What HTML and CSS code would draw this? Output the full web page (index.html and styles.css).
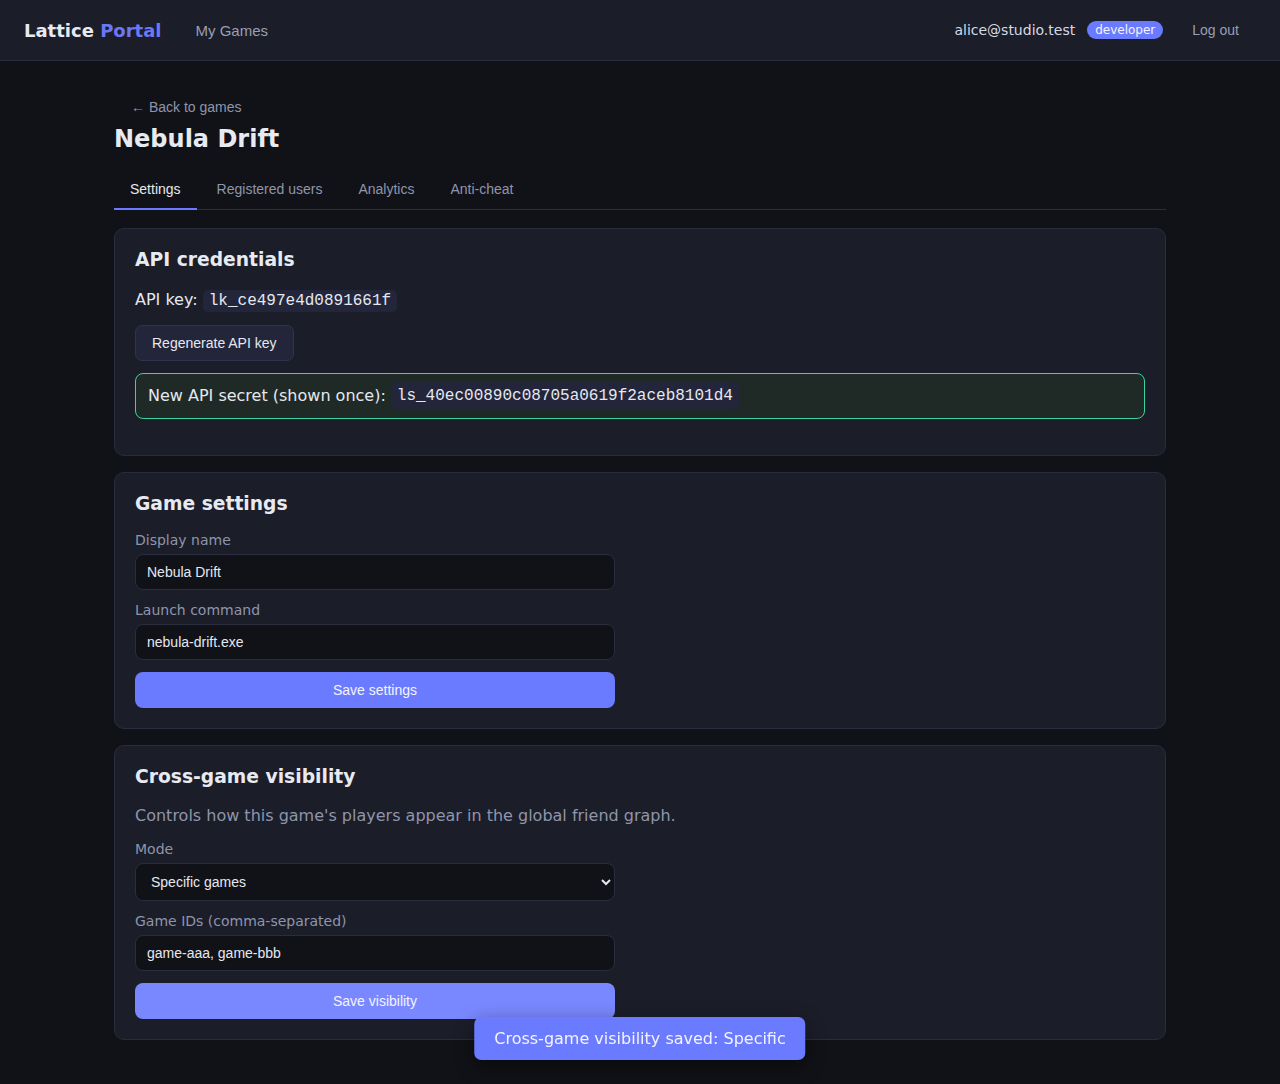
FILE: index.html
```html
<!DOCTYPE html>
<html lang="en">
<head>
<meta charset="utf-8">
<title>Lattice Portal</title>
<link rel="stylesheet" href="styles.css">
</head>
<body>
<header class="topbar">
  <div class="brand">Lattice <span class="brand-accent">Portal</span></div>
  <nav class="mainnav"><a class="navlink" href="#">My Games</a></nav>
  <div class="user">
    <span class="email">alice@studio.test</span>
    <span class="badge">developer</span>
    <button class="linkbtn logout">Log out</button>
  </div>
</header>

<main class="page">
  <button class="linkbtn back">← Back to games</button>
  <h1 class="title">Nebula Drift</h1>

  <div class="tabs">
    <button class="tab active">Settings</button>
    <button class="tab">Registered users</button>
    <button class="tab">Analytics</button>
    <button class="tab">Anti-cheat</button>
  </div>

  <section class="card first">
    <h2>API credentials</h2>
    <p class="keyline">API key: <code>lk_ce497e4d0891661f</code></p>
    <button class="btn-secondary">Regenerate API key</button>
    <div class="secret">New API secret (shown once): <code>ls_40ec00890c08705a0619f2aceb8101d4</code></div>
  </section>

  <section class="card">
    <h2>Game settings</h2>
    <label class="field">
      <span class="label">Display name</span>
      <input class="input" type="text" value="Nebula Drift">
    </label>
    <label class="field">
      <span class="label">Launch command</span>
      <input class="input" type="text" value="nebula-drift.exe">
    </label>
    <button class="btn-primary">Save settings</button>
  </section>

  <section class="card">
    <h2>Cross-game visibility</h2>
    <p class="desc">Controls how this game's players appear in the global friend graph.</p>
    <label class="field">
      <span class="label">Mode</span>
      <select class="input select">
        <option>All games</option>
        <option selected>Specific games</option>
        <option>None</option>
      </select>
    </label>
    <label class="field">
      <span class="label">Game IDs (comma-separated)</span>
      <input class="input" type="text" value="game-aaa, game-bbb">
    </label>
    <button class="btn-primary hover">Save visibility</button>
  </section>
</main>

<div class="toast">Cross-game visibility saved: Specific</div>
</body>
</html>
```

FILE: styles.css
```css
* { box-sizing: border-box; }

html, body {
  margin: 0;
  padding: 0;
}

body {
  background: #111217;
  color: #e6e8f0;
  font-family: "DejaVu Sans", sans-serif;
  font-size: 16px;
  min-height: 1084px;
}

.topbar {
  height: 61px;
  display: flex;
  align-items: center;
  padding: 0 25px 0 24px;
  background: #1b1d29;
  border-bottom: 1px solid #2a2e45;
}

.brand {
  font-weight: bold;
  font-size: 18px;
  color: #e8eaf2;
}

.brand-accent { color: #6b78f5; }

.mainnav { margin-left: 34px; }

.navlink {
  font-family: "Liberation Sans", Arial, sans-serif;
  font-size: 15px;
  color: #9a9fb3;
  text-decoration: none;
}

.user {
  margin-left: auto;
  display: flex;
  align-items: center;
  gap: 12px;
}

.email {
  font-size: 14px;
  color: #d6d9e4;
}

.badge {
  background: #6b7bff;
  color: #f3f4ff;
  font-size: 12px;
  line-height: 18px;
  padding: 0 8px;
  border-radius: 9px;
}

.linkbtn {
  background: none;
  border: none;
  font-family: "Liberation Sans", Arial, sans-serif;
  font-size: 14px;
  color: #9a9fb3;
  padding: 6px 16px;
  cursor: pointer;
}

.logout { margin-left: 1px; }

.page {
  max-width: 1100px;
  margin: 0 auto;
  padding: 32px 24px 40px;
  display: flex;
  flex-direction: column;
  align-items: stretch;
}

.back {
  align-self: flex-start;
  height: 28px;
  padding: 0 16px;
  margin-left: 1px;
  color: #8f95ab;
}

.title {
  margin: 4px 0 0;
  font-size: 24px;
  line-height: 28px;
  font-weight: bold;
  color: #e8eaf2;
}

.tabs {
  margin-top: 21px;
  display: flex;
  gap: 4px;
  border-bottom: 1px solid #2c2f40;
}

.tab {
  height: 36px;
  padding: 0 16px 4px;
  background: none;
  border: none;
  border-bottom: 2px solid transparent;
  margin-bottom: -1px;
  font-family: "Liberation Sans", Arial, sans-serif;
  font-size: 14px;
  color: #8f95ab;
  cursor: pointer;
}

.tab.active {
  color: #e6e8f0;
  border-bottom-color: #6b7bff;
}

.card {
  margin-top: 16px;
  background: #1b1d29;
  border: 1px solid #2a2d3e;
  border-radius: 10px;
  padding: 19px 20px 20px;
}

.card.first { margin-top: 18px; }

.card h2 {
  margin: 0;
  font-size: 18.72px;
  line-height: 24px;
  font-weight: bold;
  color: #e8eaf2;
}

code {
  font-family: "Liberation Mono", "Courier New", monospace;
  font-size: 16px;
  background: #23263a;
  padding: 2px 6px;
  border-radius: 5px;
  color: #e6e8f0;
}

.keyline {
  margin: 16px 0 12px;
  line-height: 24px;
}

.btn-secondary {
  display: block;
  height: 36px;
  padding: 0 16px;
  background: #23263a;
  border: 1px solid #30344a;
  border-radius: 7px;
  color: #e6e8f0;
  font-family: "Liberation Sans", Arial, sans-serif;
  font-size: 14px;
  cursor: pointer;
}

.secret {
  height: 46px;
  margin: 12px 0 16px;
  padding: 0 12px;
  display: flex;
  align-items: center;
  gap: 5px;
  background: #1f2a26;
  border: 1px solid #3ad3a2;
  border-radius: 8px;
  line-height: 24px;
  color: #e6e8f0;
}

.field {
  display: flex;
  flex-direction: column;
  width: 480px;
  margin-bottom: 12px;
}

.card h2 + .field { margin-top: 16px; }

.label {
  font-size: 14px;
  line-height: 17px;
  color: #8f95ab;
  margin-bottom: 5px;
}

.input {
  height: 36px;
  padding: 0 11px;
  background: #111218;
  border: 1px solid #2a2d3e;
  border-radius: 8px;
  color: #e6e8f0;
  font-family: "Liberation Sans", Arial, sans-serif;
  font-size: 14px;
  outline: none;
}

.select {
  height: 38px;
  padding: 0 11px;
  color-scheme: dark;
}

.desc {
  margin: 15px 0 13px;
  line-height: 24px;
  color: #8f95ab;
}

.btn-primary {
  display: block;
  width: 480px;
  height: 36px;
  background: #6b7bff;
  border: none;
  border-radius: 8px;
  color: #f3f4ff;
  font-family: "Liberation Sans", Arial, sans-serif;
  font-size: 14px;
  cursor: pointer;
}

.btn-primary.hover {
  background: #7a88ff;
}

.toast {
  position: fixed;
  left: 50%;
  bottom: 24px;
  transform: translateX(-50%);
  background: #6b7bff;
  color: #f3f4ff;
  font-size: 16px;
  line-height: 19px;
  padding: 12px 20px;
  border-radius: 7px;
  box-shadow: 0 6px 20px rgba(0, 0, 0, 0.45);
  white-space: nowrap;
}
```
